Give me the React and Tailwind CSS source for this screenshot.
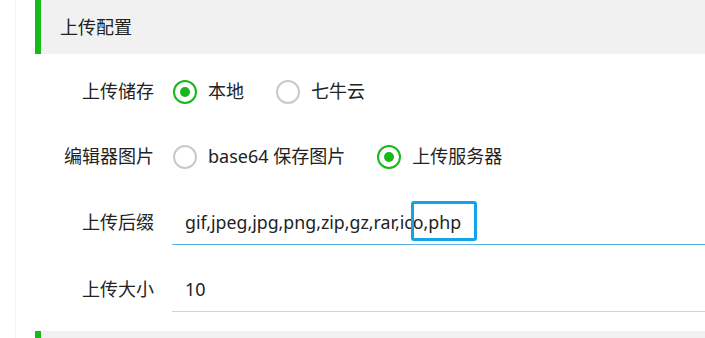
import React from "react";

const FONT = "font-['Noto_Sans','Noto_Sans_CJK_SC',sans-serif]";

function Radio({ checked, label }) {
  return (
    <div className="flex items-center">
      {checked ? (
        <span className="flex h-[24px] w-[24px] items-center justify-center rounded-full border-2 border-[#17b917]">
          <span className="h-[10px] w-[10px] rounded-full bg-[#17b917]" />
        </span>
      ) : (
        <span className="h-[24px] w-[24px] rounded-full border-2 border-[#c9c9c9]" />
      )}
      <span className="ml-[11px] text-[18px] text-[#222]">{label}</span>
    </div>
  );
}

function Row({ label, children, className = "" }) {
  return (
    <div className={`flex h-[45px] items-center ${className}`}>
      <div className="w-[120px] pr-[1px] text-right text-[18px] text-[#222]">{label}</div>
      <div className="ml-[17px] flex h-full flex-1 items-center">{children}</div>
    </div>
  );
}

export default function App() {
  return (
    <div className={`relative h-[338px] w-[705px] overflow-hidden bg-white ${FONT}`}>
      <div className="ml-[15px] h-full border-l border-[#f4f4f4] pl-[19px]">
        <div className="flex h-[54px] items-center border-l-[6px] border-[#17b917] bg-[#f1f1f1] pl-[19px] text-[18px] text-[#222]">
          上传配置
        </div>

        <Row label="上传储存" className="mt-[15px]">
          <div className="flex items-center gap-[32px] pl-[1px]">
            <Radio checked label="本地" />
            <Radio label="七牛云" />
          </div>
        </Row>

        <Row label="编辑器图片" className="mt-[20px]">
          <div className="flex items-center gap-[32px] pl-[1px]">
            <Radio label="base64 保存图片" />
            <Radio checked label="上传服务器" />
          </div>
        </Row>

        <Row label="上传后缀" className="mt-[21px]">
          <div className="relative flex h-full flex-1 items-center border-b border-[#5ab2e4] pl-[13px] text-[17.75px] text-[#222]">
            gif,jpeg,jpg,png,zip,gz,rar,ico,php
            <div className="absolute left-[239px] top-[1px] h-[40px] w-[66px] rounded-[3px] border-[3px] border-[#12a3e8]" />
          </div>
        </Row>

        <Row label="上传大小" className="mt-[22px]">
          <div className="flex h-full flex-1 items-center border-b border-[#d2d2d2] pl-[13px] text-[18px] text-[#222]">
            10
          </div>
        </Row>

        <div className="mt-[19px] h-[7px] border-l-[6px] border-[#17b917] bg-[#f1f1f1]" />
      </div>
    </div>
  );
}
